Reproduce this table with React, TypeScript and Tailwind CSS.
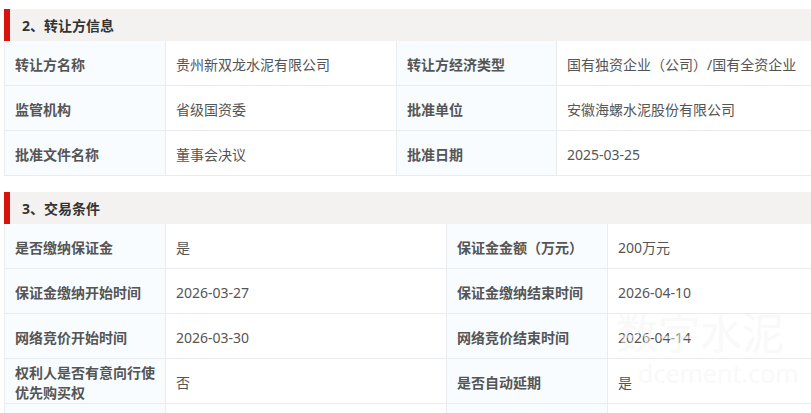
import React from "react";

const font = { fontFamily: '"Noto Sans", "Noto Sans CJK SC", sans-serif' };

type Row = [string, string, string, string];

const cellBase = "flex min-h-[45px] items-center border-b border-r border-[#e8ecef] px-[10px] pt-[3px] text-[14px] leading-[20px] text-[#555]";

function Section({ title, cols, rows, extraRow }: { title: string; cols: string; rows: Row[]; extraRow?: boolean }) {
  return (
    <div>
      <div className="flex h-[32px] items-center bg-[#f3f2f1]">
        <div className="h-full w-[6px] bg-[#d8120c]" />
        <div className="pl-[12px] pt-[1px] text-[14px] font-bold text-[#333]">{title}</div>
      </div>
      <div className={`grid ${cols} border-l border-[#e8ecef]`}>
        {rows.map((r, i) => (
          <React.Fragment key={i}>
            <div className={`${cellBase} bg-[#f8fcfe] font-bold`}>{r[0]}</div>
            <div className={`${cellBase} bg-white`}>{r[1]}</div>
            <div className={`${cellBase} bg-[#f8fcfe] font-bold`}>{r[2]}</div>
            <div className={`${cellBase} bg-white`}>{r[3]}</div>
          </React.Fragment>
        ))}
        {extraRow && (
          <>
            <div className="h-[45px] border-b border-r border-[#e8ecef] bg-[#f8fcfe]" />
            <div className="h-[45px] border-b border-r border-[#e8ecef] bg-white" />
            <div className="h-[45px] border-b border-r border-[#e8ecef] bg-[#f8fcfe]" />
            <div className="h-[45px] border-b border-r border-[#e8ecef] bg-white" />
          </>
        )}
      </div>
    </div>
  );
}

export default function App() {
  return (
    <div className="relative h-[413px] w-[811px] overflow-hidden bg-white" style={font}>
      <div className="w-[840px] pl-[4px] pt-[9px]">
        <Section
          title="2、转让方信息"
          cols="grid-cols-[161px_231px_160px_1fr]"
          rows={[
            ["转让方名称", "贵州新双龙水泥有限公司", "转让方经济类型", "国有独资企业（公司）/国有全资企业"],
            ["监管机构", "省级国资委", "批准单位", "安徽海螺水泥股份有限公司"],
            ["批准文件名称", "董事会决议", "批准日期", "2025-03-25"],
          ]}
        />
        <div className="h-[16px]" />
        <Section
          title="3、交易条件"
          cols="grid-cols-[161px_281px_161px_1fr]"
          extraRow
          rows={[
            ["是否缴纳保证金", "是", "保证金金额（万元）", "200万元"],
            ["保证金缴纳开始时间", "2026-03-27", "保证金缴纳结束时间", "2026-04-10"],
            ["网络竞价开始时间", "2026-03-30", "网络竞价结束时间", "2026-04-14"],
            ["权利人是否有意向行使优先购买权", "否", "是否自动延期", "是"],
          ]}
        />
      </div>
      <div className="pointer-events-none absolute left-[616px] top-[311px] text-[42px] leading-[44px] text-[#f4f4f4] opacity-50">
        数字水泥
      </div>
      <div className="pointer-events-none absolute left-[638px] top-[360px] text-[25px] leading-[26px] text-[#f4f4f4] opacity-50">
        dcement.com
      </div>
    </div>
  );
}
